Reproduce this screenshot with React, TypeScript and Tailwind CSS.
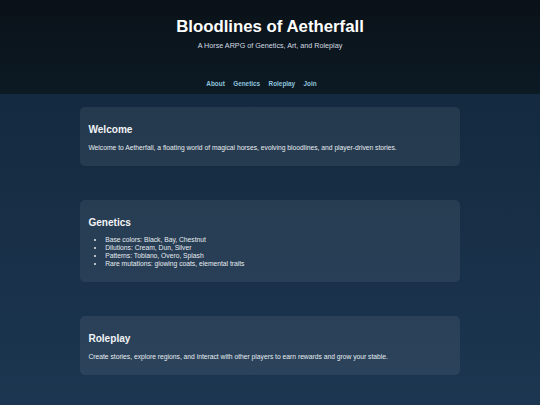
import React from 'react';

const sections = [
  {
    title: 'Welcome',
    body: 'Welcome to Aetherfall, a floating world of magical horses, evolving bloodlines, and player-driven stories.',
  },
  {
    title: 'Genetics',
    list: [
      'Base colors: Black, Bay, Chestnut',
      'Dilutions: Cream, Dun, Silver',
      'Patterns: Tobiano, Overo, Splash',
      'Rare mutations: glowing coats, elemental traits',
    ],
  },
  {
    title: 'Roleplay',
    body: 'Create stories, explore regions, and interact with other players to earn rewards and grow your stable.',
  },
];

const navLinks = ['About', 'Genetics', 'Roleplay', 'Join'];

export default function App() {
  return (
    <div
      className="min-h-[405px] bg-gradient-to-b from-[#12263a] to-[#1c3651] text-[#e6ecf0] text-[6.72px] leading-[1.15]"
      style={{ fontFamily: '"Liberation Sans", Arial, sans-serif' }}
    >
      <header className="h-[94px] bg-gradient-to-b from-[#0a1118] to-[#0c1a24] text-center pt-[16.8px]">
        <h1 className="text-[16.8px] font-bold text-white leading-[1.15]">Bloodlines of Aetherfall</h1>
        <p className="mt-[6.2px] text-[7.2px] text-[#d4dbe2]">A Horse ARPG of Genetics, Art, and Roleplay</p>
        <nav className="mt-[29.2px] flex justify-center pr-[17px]">
          {navLinks.map((l) => (
            <a key={l} className="mx-[4.2px] text-[6.4px] font-bold text-[#8fc3df]">
              {l}
            </a>
          ))}
        </nav>
      </header>

      <main className="flex flex-col items-center gap-[33.5px] pt-[13px] pb-[20px]">
        {sections.map((s) => (
          <section key={s.title} className="w-[380px] rounded-[5px] bg-white/[0.07] p-[8.4px]">
            <h2 className="mt-[8.3px] mb-[8.3px] text-[10.08px] font-bold text-[#f2f4f6] leading-[1.15]">
              {s.title}
            </h2>
            {s.body && <p className="mb-[6.72px]">{s.body}</p>}
            {s.list && (
              <ul className="mb-[6.72px] list-disc pl-[16.8px]">
                {s.list.map((i) => (
                  <li key={i}>{i}</li>
                ))}
              </ul>
            )}
          </section>
        ))}
      </main>
    </div>
  );
}
